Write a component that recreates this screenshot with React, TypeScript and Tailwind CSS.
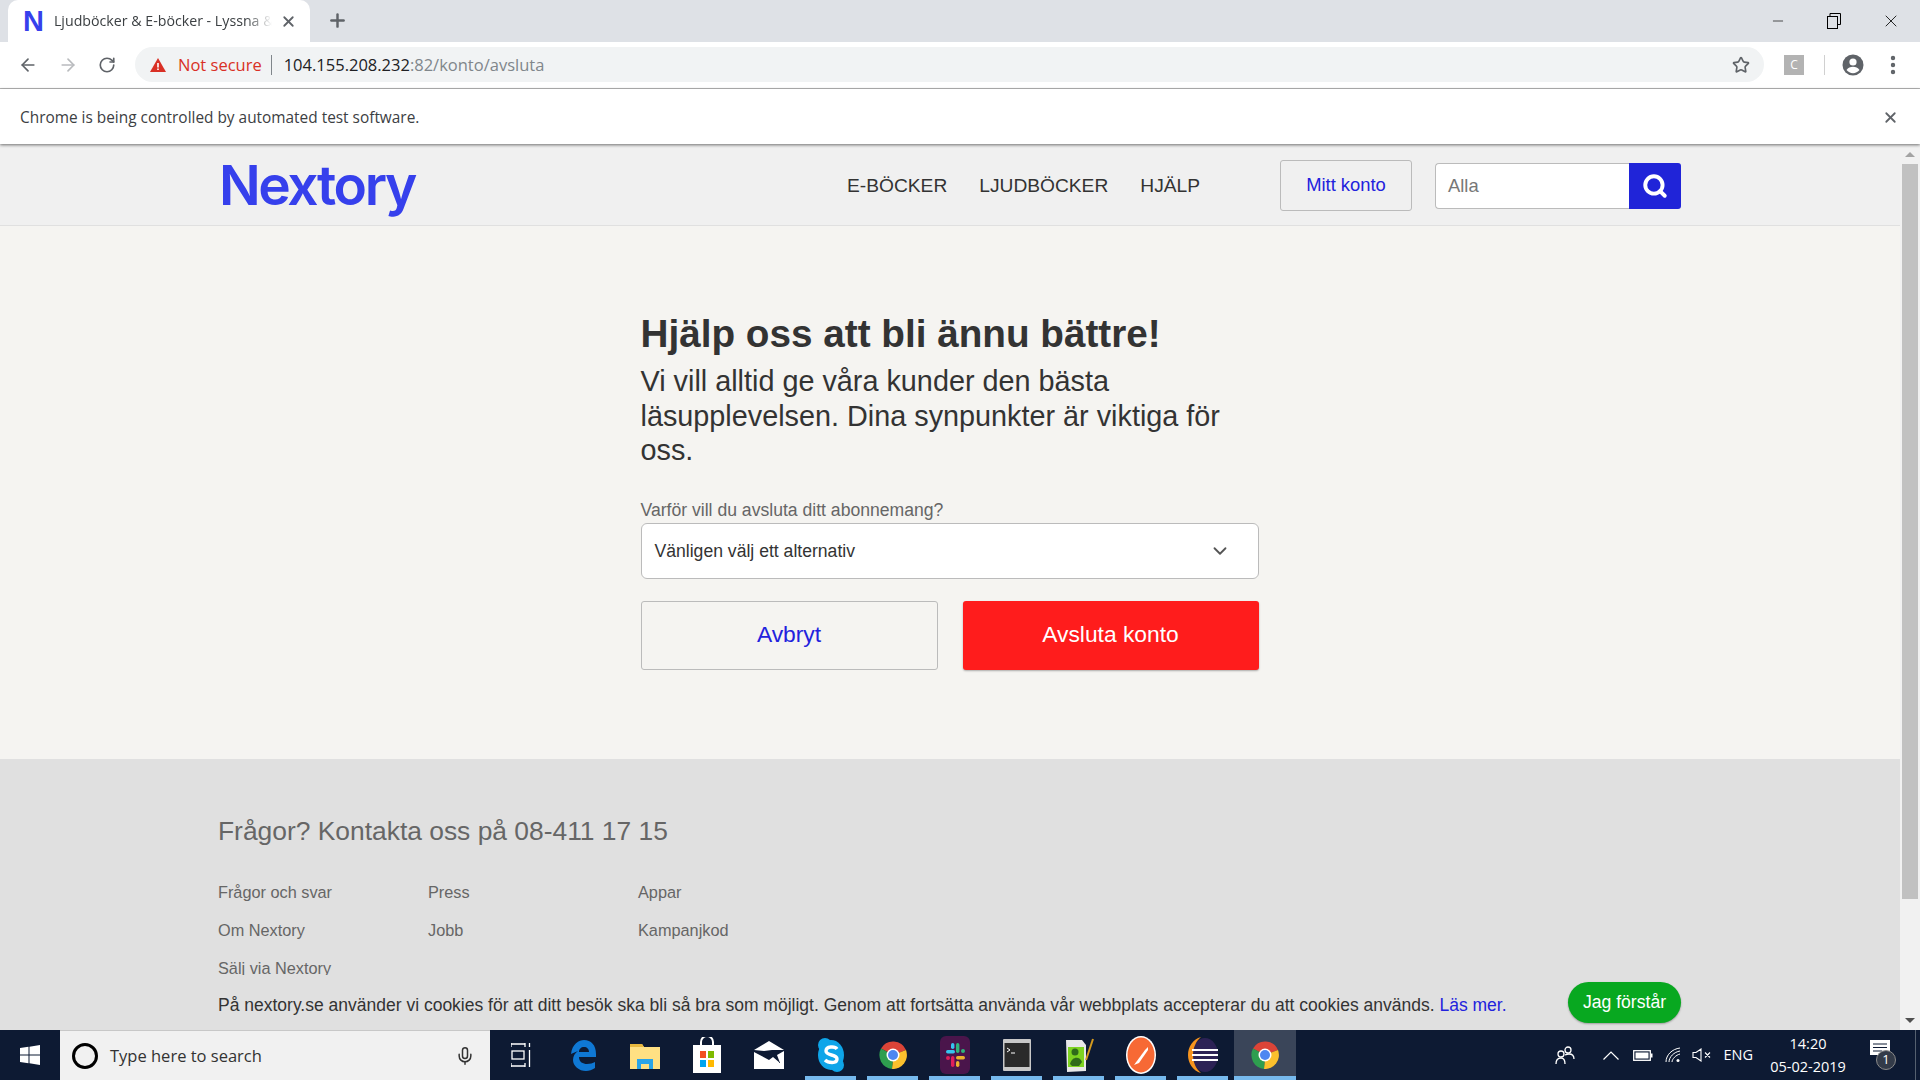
import { ArrowLeft, ArrowRight, RotateCw, Star, X, Plus, Minus, ChevronDown, Search, EllipsisVertical, Mic } from "lucide-react";

const sans = "font-['Liberation_Sans',Arial,sans-serif]";
const ui = "font-['Open_Sans','Noto_Sans',sans-serif]";

function TabBar() {
    return (
        <div className="h-[42px] bg-[#dee1e6] flex items-end shrink-0">
            <div className="ml-[8px] w-[302px] h-[42px] bg-white rounded-t-[10px] flex items-center relative">
                <span className={`ml-[15px] text-[29px] leading-none font-bold text-[#3640ec] ${sans}`}>N</span>
                <span className={`ml-[10px] w-[218px] overflow-hidden whitespace-nowrap text-[14.2px] text-[#3c4043] [mask-image:linear-gradient(to_right,black_88%,transparent)] ${ui}`}>Ljudböcker &amp; E-böcker - Lyssna &amp; läs</span>
                <X className="ml-[8px] w-[17px] h-[17px] text-[#5f6368]" strokeWidth={2.5} />
            </div>
            <Plus className="ml-[17px] mb-[11px] w-[21px] h-[21px] text-[#5f6368]" strokeWidth={2.8} />
            <div className="ml-auto h-[42px] flex items-center text-black">
                <div className="w-[56px] flex justify-center"><Minus className="w-[16px] h-[16px]" strokeWidth={1} /></div>
                <div className="w-[56px] flex justify-center">
                    <svg width="14" height="16" viewBox="0 0 14 16" fill="none" stroke="black" strokeWidth="1"><rect x="0.5" y="3.5" width="10" height="12" /><path d="M3 3V0.5h10.5v11H10.5" /></svg>
                </div>
                <div className="w-[58px] flex justify-center"><X className="w-[20px] h-[20px]" strokeWidth={1} /></div>
            </div>
        </div>
    );
}

function Toolbar() {
    return (
        <div className="h-[47px] bg-white border-b border-[#b8b8b8] flex items-center shrink-0">
            <ArrowLeft className="ml-[18px] w-[20px] h-[20px] text-[#5f6368]" strokeWidth={2} />
            <ArrowRight className="ml-[20px] w-[20px] h-[20px] text-[#b9bbbe]" strokeWidth={2} />
            <RotateCw className="ml-[20px] w-[18px] h-[18px] text-[#5f6368]" strokeWidth={2.2} />
            <div className={`ml-[19px] w-[1629px] h-[35px] -mt-[1px] pt-[1px] rounded-full bg-[#f1f3f4] flex items-center text-[16.5px] whitespace-nowrap ${ui}`}>
                <svg className="ml-[15px]" width="16" height="14" viewBox="0 0 16 14"><path d="M8 0l8 14H0z" fill="#d93025" /><path d="M7.2 5h1.6v4.6H7.2zM7.2 10.5h1.6v1.6H7.2z" fill="#fff" /></svg>
                <span className="ml-[12px] text-[#d93025]">Not secure</span>
                <span className="ml-[9px] w-px h-[20px] bg-[#80868b]" />
                <span className="ml-[12px] text-[#202124]">104.155.208.232</span>
                <span className="text-[#80868b]">:82/konto/avsluta</span>
                <Star className="ml-auto mr-[14px] w-[18px] h-[18px] text-[#5f6368]" strokeWidth={2.2} />
            </div>
            <div className={`ml-[20px] w-[20px] h-[20px] bg-[#b3b3b3] text-white text-[12px] flex items-center justify-center ${ui}`}>C</div>
            <div className="ml-[20px] w-px h-[20px] bg-[#d0d0d0]" />
            <svg className="ml-[17px]" width="22" height="22" viewBox="0 0 22 22"><circle cx="11" cy="11" r="10.5" fill="#5f6368" /><circle cx="11" cy="8" r="3.6" fill="#fff" /><path d="M4.5 16c1.5-2.6 4-3.3 6.5-3.3s5 .7 6.5 3.3c-1.6 2-4 3.2-6.5 3.2S6.100 18 4.500 16z" fill="#fff" /></svg>
            <EllipsisVertical className="ml-[17px] w-[24px] h-[24px] text-[#5f6368]" strokeWidth={2.4} />
        </div>
    );
}

function InfoBar() {
    return (
        <div className="h-[55px] pt-[2px] bg-white flex items-center justify-between shrink-0 shadow-[0_1px_3px_rgba(0,0,0,0.55)] relative z-10">
            <span className={`ml-[20px] text-[15.4px] text-[#3c4043] ${ui}`}>Chrome is being controlled by automated test software.</span>
            <X className="mr-[21px] w-[17px] h-[17px] text-[#5f6368]" strokeWidth={2.5} />
        </div>
    );
}

function SiteHeader() {
    return (
        <div className="h-[82px] bg-[#f0f0f0] border-b border-[#e0e0e0] shrink-0">
            <div className="w-[1464px] mx-auto h-full flex items-center pt-[1px] pr-[1px]">
                <span className="ml-[1px] mt-[1px] text-[55px] leading-none font-semibold tracking-[-2.4px] text-[#3640ec] font-['Inter',sans-serif]">Nextory</span>
                <nav className="ml-auto mt-[2px] flex gap-[32px] text-[19.2px] text-[#333] uppercase">
                    <a>E-böcker</a>
                    <a>Ljudböcker</a>
                    <a>Hjälp</a>
                </nav>
                <button className="ml-[80px] w-[132px] h-[51px] border border-[#bbb] rounded-[3px] text-[18.4px] text-[#2222dd]">Mitt konto</button>
                <div className="ml-[23px] mt-[2px] flex h-[46px] w-[246px]">
                    <div className="flex-1 bg-white border border-r-0 border-[#bbb] rounded-l-[4px] flex items-center pl-[12px] text-[18.4px] text-[#777]">Alla</div>
                    <div className="w-[52px] bg-[#2024d8] rounded-r-[3px] flex items-center justify-center">
                        <Search className="w-[26px] h-[26px] text-white" strokeWidth={3.6} />
                    </div>
                </div>
            </div>
        </div>
    );
}

function CancelForm() {
    return (
        <div className="h-[533px] bg-[#f5f4f1] shrink-0 pt-[86px]">
            <div className="w-[619px] mx-auto pr-[1px]">
                <h1 className="text-[38.7px] leading-[44px] font-bold text-[#333] whitespace-nowrap">Hjälp oss att bli ännu bättre!</h1>
                <p className="mt-[8px] text-[28.8px] leading-[34.56px] text-[#333] pr-[20px]">Vi vill alltid ge våra kunder den bästa läsupplevelsen. Dina synpunkter är viktiga för oss.</p>
                <label className="block mt-[31px] text-[17.6px] leading-[22px] text-[#666]">Varför vill du avsluta ditt abonnemang?</label>
                <div className="mt-[2px] h-[56px] pt-[1px] bg-white border border-[#bbb] rounded-[6px] flex items-center justify-between pl-[13px] pr-[27px] text-[17.6px] text-[#333]">
                    Vänligen välj ett alternativ
                    <ChevronDown className="w-[22px] h-[22px] text-[#555]" strokeWidth={2} />
                </div>
                <div className="mt-[22px] flex justify-between">
                    <button className="w-[297px] h-[69px] pb-[2px] border border-[#bbb] rounded-[3px] text-[22.8px] text-[#2222dd]">Avbryt</button>
                    <button className="w-[296px] h-[69px] pb-[2px] bg-[#ff1c1c] rounded-[3px] text-[22.8px] text-white shadow-[0_1px_2px_rgba(0,0,0,0.3)]">Avsluta konto</button>
                </div>
            </div>
        </div>
    );
}

const footerLinks = ["Frågor och svar", "Press", "Appar", "Om Nextory", "Jobb", "Kampanjkod", "Sälj via Nextory"];

function SiteFooter() {
    return (
        <div className="flex-1 bg-[#e0e0e0] pt-[56px]">
            <div className="w-[1464px] mx-auto">
                <h2 className="text-[26.4px] leading-[32px] text-[#666]">Frågor? Kontakta oss på 08-411 17 15</h2>
                <div className="mt-[34px] grid grid-cols-[210px_210px_210px] gap-y-[16px] text-[16.3px] leading-[22px] text-[#666]">
                    {footerLinks.map((l) => <a key={l}>{l}</a>)}
                </div>
            </div>
        </div>
    );
}

function CookieBar() {
    return (
        <div className="absolute left-0 right-0 bottom-0 h-[55px] pt-[6px] bg-[#e0e0e0]">
            <div className="w-[1464px] mx-auto flex items-center h-full justify-between pr-[1px]">
                <p className="text-[17.5px] text-[#333] whitespace-nowrap">På nextory.se använder vi cookies för att ditt besök ska bli så bra som möjligt. Genom att fortsätta använda vår webbplats accepterar du att cookies används. <a className="text-[#2222dd]">Läs mer.</a></p>
                <button className="w-[113px] h-[41px] -mt-[6px] rounded-full bg-[#08a820] text-white text-[17.6px] shadow-[0_1px_2px_rgba(0,0,0,0.3)]">Jag förstår</button>
            </div>
        </div>
    );
}

function Scrollbar() {
    return (
        <div className="w-[20px] bg-[#f1f1f1] flex flex-col items-center shrink-0">
            <div className="h-[20px] flex items-center justify-center">
                <div className="w-0 h-0 border-x-[5px] border-x-transparent border-b-[5px] border-b-[#a3a3a3]" />
            </div>
            <div className="w-[16px] h-[735px] bg-[#c1c1c1]" />
            <div className="mt-auto h-[20px] flex items-center justify-center">
                <div className="w-0 h-0 border-x-[5px] border-x-transparent border-t-[5px] border-t-[#505050]" />
            </div>
        </div>
    );
}

function Chrome() {
    return (
        <svg width="28" height="28" viewBox="0 0 28 28">
            <path d="M14 14L2 7.500A14 14 0 0 1 27 9z" fill="#db4437" />
            <path d="M14 14L27 9A14 14 0 0 1 13 28z" fill="#fbc02d" />
            <path d="M14 14L13 28A14 14 0 0 1 2 7.500z" fill="#2e9e4f" />
            <circle cx="14" cy="14" r="6.500" fill="#fff" />
            <circle cx="14" cy="14" r="5" fill="#4e87f1" />
        </svg>
    );
}

const taskIcons = [
    <svg key="tv" width="20" height="24" viewBox="0 0 20 24" fill="none" stroke="#fff" strokeWidth="1.300"><path d="M0 1h14M0 23h14M14 0v4M14 20v4M0 0v4M0 20v4" /><rect x="1" y="8" width="12" height="8" /><path d="M18.500 0v4M18.500 7v17" /></svg>,
    <svg key="edge" width="26" height="32" viewBox="0 0 26 32"><path d="M1 15C2 5 9 1 14 1c7 0 12 5 12 14v3H9c0 5 4 7 8 7 3 0 6-1 8-2v6c-3 2-6 3-9 3C9 32 3 27 3 21c0-4 2-7 5-9-2 1-5 2-7 3zm8-2h10c0-3-2-5-5-5s-5 2-5 5z" fill="#0f78d4" /></svg>,
    <svg key="ex" width="30" height="28" viewBox="0 0 30 28"><path d="M0 3h12l2 3h16v22H0z" fill="#ffe083" /><path d="M0 3h12l2 3H0z" fill="#e8b83e" /><path d="M7 28v-10h16v10h-4v-5h-8v5z" fill="#2aa4e8" /></svg>,
    <svg key="st" width="30" height="36" viewBox="0 0 30 36"><rect x="1" y="8" width="28" height="28" fill="#fff" /><path d="M9 10V5a6 6 0 0 1 12 0v5" fill="none" stroke="#fff" strokeWidth="2" /><rect x="8" y="14" width="6" height="7" fill="#f25022" /><rect x="16" y="14" width="6" height="7" fill="#7fba00" /><rect x="8" y="23" width="6" height="7" fill="#00a4ef" /><rect x="16" y="23" width="6" height="7" fill="#ffb900" /></svg>,
    <svg key="ml" width="30" height="30" viewBox="0 0 30 30"><path d="M15 1L30 10H18L10 11 0 10z" fill="#fff" /><path d="M0 12l15 8 4-3 7 6-3-8 7-4v18H0z" fill="#fff" /></svg>,
    <svg key="sk" width="28" height="36" viewBox="0 0 28 36"><ellipse cx="14" cy="18" rx="13" ry="15" fill="#0ea5e9" /><circle cx="8" cy="8" r="7" fill="#0ea5e9" /><circle cx="20" cy="28" r="7" fill="#0ea5e9" /><path d="M20 12c-2-3-11-3-11 2 0 5 11 3 11 8 0 5-9 4-12 1" fill="none" stroke="#fff" strokeWidth="3.400" /></svg>,
    <Chrome key="c1" />,
    <svg key="sl" width="30" height="38" viewBox="0 0 30 38"><rect width="30" height="38" rx="6" fill="#4a154b" /><rect x="6" y="14" width="9" height="3.400" rx="1.700" fill="#36c5f0" /><rect x="11" y="7" width="3.400" height="6" rx="1.700" fill="#36c5f0" /><rect x="16" y="7" width="3.400" height="10" rx="1.700" fill="#2eb67d" /><rect x="21" y="13" width="4" height="4" rx="2" fill="#2eb67d" /><rect x="6" y="20" width="4" height="4" rx="2" fill="#e01e5a" /><rect x="11" y="20" width="3.400" height="11" rx="1.700" fill="#e01e5a" /><rect x="16" y="20" width="9" height="3.400" rx="1.700" fill="#ecb22e" /><rect x="16" y="25" width="3.400" height="6" rx="1.700" fill="#ecb22e" /></svg>,
    <svg key="tm" width="28" height="32" viewBox="0 0 28 32"><rect width="28" height="32" rx="1" fill="#c8c8c8" /><rect x="1.500" y="4" width="25" height="24" fill="#2a2a2a" /><path d="M4 9l3 2-3 2M8 14h4" stroke="#fff" strokeWidth="1" fill="none" /></svg>,
    <svg key="np" width="30" height="34" viewBox="0 0 30 34"><path d="M2 2h16l4 5v26L3 34z" fill="#e8e8e8" /><rect x="4" y="9" width="16" height="20" fill="#7ed321" /><circle cx="11" cy="14" r="3.500" fill="#2f6b1a" /><path d="M6 26c2-8 10-8 12-2l-3 4H8z" fill="#2f6b1a" /><path d="M22 22L29 1" stroke="#d49a1e" strokeWidth="2" /></svg>,
    <svg key="pm" width="30" height="38" viewBox="0 0 30 38"><ellipse cx="15" cy="19" rx="15" ry="19" fill="#fff" /><ellipse cx="15" cy="19" rx="13.500" ry="17.500" fill="#f76935" /><path d="M8 29l11-15 3-3 0 3-9 13z" fill="#fff" /></svg>,
    <svg key="ec" width="30" height="36" viewBox="0 0 30 36"><ellipse cx="17" cy="18" rx="13" ry="17" fill="#2c2255" /><path d="M13 0C5 2 0 10 0 18s5 16 13 18C8 32 5 25 5 18S8 4 13 0z" fill="#f7941e" /><path d="M4 13h26M4 18h26M4 23h26" stroke="#fff" strokeWidth="2" /></svg>,
];

function Taskbar() {
    return (
        <div className="h-[50px] bg-[#0d1a33] flex items-stretch shrink-0">
            <div className="w-[60px] flex items-center justify-center">
                <svg width="20" height="20" viewBox="0 0 20 20" fill="#fff"><path d="M0 3l8.500-1.200V9.500H0zM9.500 1.700L20 0v9.500H9.500zM0 10.500h8.500v7.700L0 17zM9.500 10.500H20V20L9.500 18.300z" /></svg>
            </div>
            <div className={`w-[430px] bg-[#f1f1f1] border-t border-[#c8c8c8] flex items-center ${ui}`}>
                <div className="ml-[12px] w-[26px] h-[26px] rounded-full border-[3.500px] border-black" />
                <span className="ml-[12px] pt-[1px] text-[16.5px] text-[#333]">Type here to search</span>
                <Mic className="ml-auto mr-[15px] w-[20px] h-[20px] text-[#333]" strokeWidth={1.800} />
            </div>
            {taskIcons.map((icon, i) => (
                <div key={i} className={`w-[62px] flex items-center justify-center relative ${i < 5 ? "" : "after:content-[''] after:absolute after:left-[5px] after:right-[6px] after:bottom-0 after:h-[4px] after:bg-[#76b9ed]"}`}>{icon}</div>
            ))}
            <div className="w-[62px] flex items-center justify-center relative bg-[#3a4559] after:content-[''] after:absolute after:left-0 after:right-0 after:bottom-0 after:h-[4px] after:bg-[#76b9ed]"><Chrome /></div>
            <Tray />
        </div>
    );
}

function Tray() {
    return (
        <div className={`ml-auto flex items-center text-white ${ui}`}>
            <svg width="20" height="20" viewBox="0 0 20 20" fill="none" stroke="#fff" strokeWidth="1.300"><circle cx="13" cy="5" r="3" /><circle cx="6" cy="9" r="3" /><path d="M1 19c0-4 2-6 5-6s4 2 4 6M10 10c2-1 3-1 4-1 3 0 5 2 5 5" /></svg>
            <svg className="ml-[28px]" width="16" height="9" viewBox="0 0 16 9" fill="none" stroke="#fff" strokeWidth="1.200"><path d="M0.500 8.500L8 1l7.500 7.500" /></svg>
            <svg className="ml-[14px]" width="20" height="11" viewBox="0 0 20 11"><rect x="0.700" y="0.700" width="16.600" height="9.600" fill="none" stroke="#fff" strokeWidth="1.300" /><rect x="2.500" y="2.500" width="13" height="6" fill="#fff" /><rect x="18" y="3.500" width="1.500" height="4" fill="#fff" /></svg>
            <svg className="ml-[12px]" width="16" height="16" viewBox="0 0 16 16" fill="none" stroke="#fff" strokeWidth="1"><path d="M1 15C1 8 7 2 15 1M4 15c0-5 5-10 11-11M7 15c0-3 4-7 8-8" /><circle cx="13" cy="13.500" r="1.500" fill="#fff" stroke="none" /></svg>
            <svg className="ml-[11px]" width="20" height="14" viewBox="0 0 20 14" fill="none" stroke="#fff" strokeWidth="1.100"><path d="M1 4.500h3L9 1v12L4 9.500H1zM13 4.500l5 5M18 4.500l-5 5" /></svg>
            <span className="ml-[11px] text-[14.5px]">ENG</span>
            <div className="ml-[12px] w-[86px] text-center text-[14.5px] leading-[23px]">
                <div>14:20</div>
                <div>05-02-2019</div>
            </div>
            <div className="ml-[19px] relative w-[26px] h-[30px]">
                <svg width="20" height="22" viewBox="0 0 20 22"><path d="M0 0h20v15H12l-3 5v-5H0z" fill="#fff" /><path d="M3 4h14M3 7.500h14M3 11h9" stroke="#0d1a33" strokeWidth="1" /></svg>
                <div className="absolute right-0 bottom-0 w-[20px] h-[20px] rounded-full bg-[#333b49] border border-[#8a8a8a] flex items-center justify-center text-[13px]">1</div>
            </div>
            <div className="ml-[19px] mr-[4px] w-px h-full bg-[#55606f]" />
        </div>
    );
}

export default function App() {
    return (
        <div className={`w-[1920px] h-[1080px] flex flex-col overflow-hidden bg-white ${sans}`}>
            <TabBar />
            <Toolbar />
            <InfoBar />
            <div className="flex-1 flex min-h-0">
                <div className="flex-1 flex flex-col relative overflow-hidden">
                    <SiteHeader />
                    <CancelForm />
                    <SiteFooter />
                    <CookieBar />
                </div>
                <Scrollbar />
            </div>
            <Taskbar />
        </div>
    );
}
